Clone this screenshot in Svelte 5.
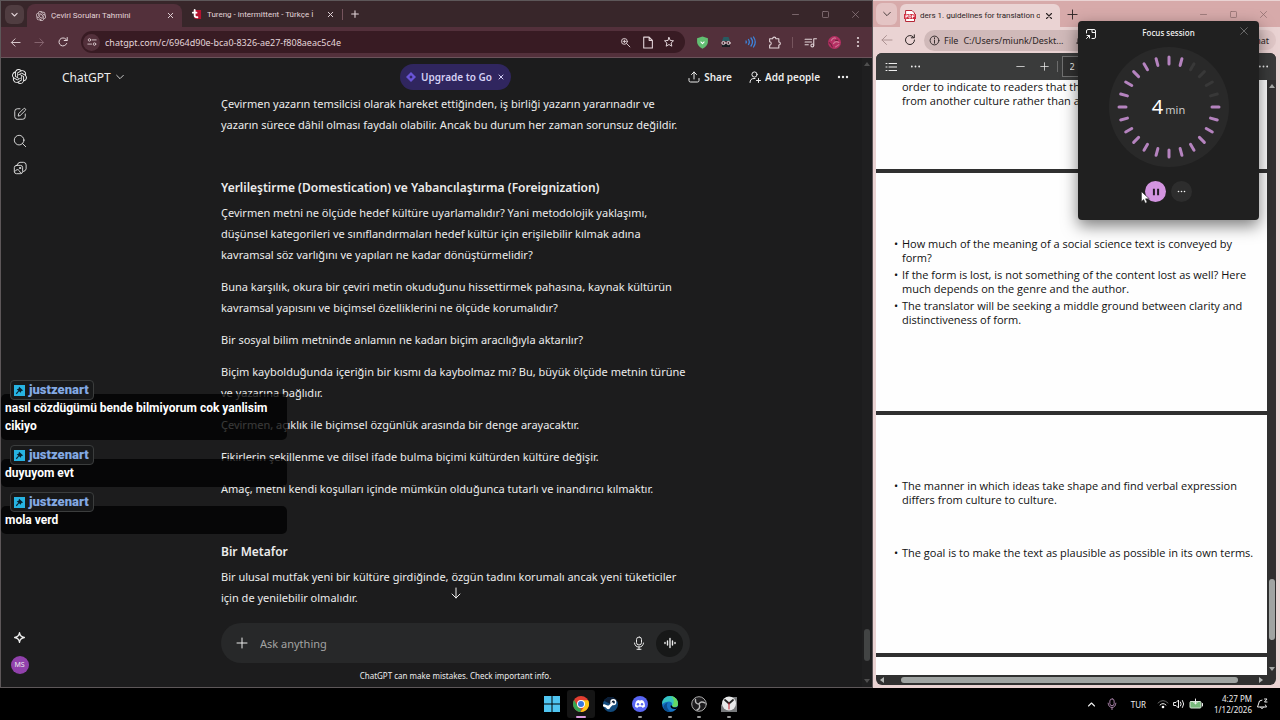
<script>
	const openai =
		'M22.28 9.82a5.98 5.98 0 0 0-.51-4.91 6.05 6.05 0 0 0-6.51-2.9A6.07 6.07 0 0 0 4.98 4.18a5.98 5.98 0 0 0-4 2.9 6.05 6.05 0 0 0 .75 7.1 5.98 5.98 0 0 0 .51 4.91 6.05 6.05 0 0 0 6.51 2.9A5.98 5.98 0 0 0 13.26 24a6.06 6.06 0 0 0 5.77-4.21 5.99 5.99 0 0 0 4-2.9 6.06 6.06 0 0 0-.75-7.07zm-9.02 12.61a4.48 4.48 0 0 1-2.88-1.04l.14-.08 4.78-2.76a.8.8 0 0 0 .39-.68v-6.74l2.02 1.17a.07.07 0 0 1 .04.05v5.58a4.5 4.5 0 0 1-4.49 4.5zM3.6 18.3a4.47 4.47 0 0 1-.54-3.01l.14.08 4.79 2.76a.77.77 0 0 0 .78 0l5.84-3.37v2.33a.08.08 0 0 1-.03.07L9.74 19.95A4.5 4.5 0 0 1 3.6 18.3zM2.34 7.9a4.49 4.49 0 0 1 2.37-1.98v5.68a.77.77 0 0 0 .38.68l5.82 3.35-2.02 1.17a.08.08 0 0 1-.07 0l-4.83-2.79A4.5 4.5 0 0 1 2.34 7.87zm16.6 3.85L13.1 8.36l2.02-1.16a.08.08 0 0 1 .07 0l4.83 2.79a4.49 4.49 0 0 1-.68 8.1v-5.67a.79.79 0 0 0-.4-.67zm2-3.02-.14-.09-4.77-2.78a.78.78 0 0 0-.79 0L9.41 9.23V6.9a.07.07 0 0 1 .03-.06l4.83-2.79a4.5 4.5 0 0 1 6.68 4.66zM8.3 12.86 6.29 11.7a.08.08 0 0 1-.04-.06V6.07a4.5 4.5 0 0 1 7.38-3.45l-.15.08L8.7 5.46a.8.8 0 0 0-.39.68zm1.1-2.36 2.6-1.5 2.61 1.5v3l-2.6 1.5-2.61-1.5z';

	const sections = [
		{
			paragraphs: [
				['Çevirmen yazarın temsilcisi olarak hareket ettiğinden, iş birliği yazarın yararınadır ve', 'yazarın sürece dâhil olması faydalı olabilir. Ancak bu durum her zaman sorunsuz değildir.']
			]
		},
		{
			title: 'Yerlileştirme (Domestication) ve Yabancılaştırma (Foreignization)',
			paragraphs: [
				['Çevirmen metni ne ölçüde hedef kültüre uyarlamalıdır? Yani metodolojik yaklaşımı,', 'düşünsel kategorileri ve sınıflandırmaları hedef kültür için erişilebilir kılmak adına', 'kavramsal söz varlığını ve yapıları ne kadar dönüştürmelidir?'],
				['Buna karşılık, okura bir çeviri metin okuduğunu hissettirmek pahasına, kaynak kültürün', 'kavramsal yapısını ve biçimsel özelliklerini ne ölçüde korumalıdır?'],
				['Bir sosyal bilim metninde anlamın ne kadarı biçim aracılığıyla aktarılır?'],
				['Biçim kaybolduğunda içeriğin bir kısmı da kaybolmaz mı? Bu, büyük ölçüde metnin türüne', 've yazarına bağlıdır.'],
				['Çevirmen, açıklık ile biçimsel özgünlük arasında bir denge arayacaktır.'],
				['Fikirlerin şekillenme ve dilsel ifade bulma biçimi kültürden kültüre değişir.'],
				['Amaç, metni kendi koşulları içinde mümkün olduğunca tutarlı ve inandırıcı kılmaktır.']
			]
		},
		{
			title: 'Bir Metafor',
			paragraphs: [
				['Bir ulusal mutfak yeni bir kültüre girdiğinde, özgün tadını korumalı ancak yeni tüketiciler', 'için de yenilebilir olmalıdır.']
			]
		}
	];

	const messages = [
		['nasıl cözdügümü bende bilmiyorum cok yanlisim', 'cikiyo'],
		['duyuyom evt'],
		['mola verd']
	];

	// 24 ticks round the dial, the elapsed ones are dimmed
	const ticks = Array.from({ length: 24 }, (_, i) => ({
		angle: i * 15,
		done: i > 1 && i < 6
	}));

	let question = '';
	let url = 'chatgpt.com/c/6964d90e-bca0-8326-ae27-f808aeac5c4e';
	let file = 'C:/Users/miunk/Deskt...';
	let page = '2';
</script>

<div class="desktop">
	<div class="windows">
		<section class="chrome">
			<div class="tabs">
				<button class="tab-search" aria-label="Search tabs">
					<svg viewBox="0 0 12 12" width="9" height="9"><path stroke-width="1.5" d="M2.5 4.5 6 8l3.5-3.5" /></svg>
				</button>
				<div class="tab active">
					<svg class="fill" viewBox="0 0 24 24" width="10" height="10"><path d={openai} /></svg>
					<span class="title">Çeviri Soruları Tahmini</span>
					<button aria-label="Close tab"><svg viewBox="0 0 12 12" width="9" height="9"><path stroke-width="1.3" d="m3 3 6 6M9 3 3 9" /></svg></button>
				</div>
				<div class="tab">
					<svg viewBox="0 0 12 12" width="11" height="11">
						<path fill="#b5122f" stroke="none" d="M3 1h8v10H4z" />
						<path stroke="#fff" stroke-width="2" d="M4 1v6q0 2 3 2M2 4h4" />
					</svg>
					<span class="title">Tureng - intermittent - Türkçe İ</span>
					<button aria-label="Close tab"><svg viewBox="0 0 12 12" width="9" height="9"><path stroke-width="1.3" d="m3 3 6 6M9 3 3 9" /></svg></button>
				</div>
				<i class="divider"></i>
				<button class="cell" aria-label="New tab"><svg viewBox="0 0 12 12" width="10" height="10"><path stroke-width="1.3" d="M6 2v8M2 6h8" /></svg></button>
				<div class="controls">
					<button aria-label="Minimize"><svg viewBox="0 0 12 12" width="9" height="9"><path d="M2 6h8" /></svg></button>
					<button aria-label="Maximize"><svg viewBox="0 0 12 12" width="9" height="9"><rect x="2" y="2" width="8" height="8" rx="1" /></svg></button>
					<button aria-label="Close"><svg viewBox="0 0 12 12" width="9" height="9"><path d="m2 2 8 8M10 2l-8 8" /></svg></button>
				</div>
			</div>

			<div class="toolbar">
				<button class="cell" aria-label="Back"><svg viewBox="0 0 12 12" width="11" height="11"><path d="M11 6H2M5.5 2 1.5 6l4 4" /></svg></button>
				<button class="cell dim" aria-label="Forward"><svg viewBox="0 0 12 12" width="11" height="11"><path d="M1 6h9M6.5 2l4 4-4 4" /></svg></button>
				<button class="cell" aria-label="Reload"><svg viewBox="0 0 12 12" width="12" height="12"><path d="M9.7 7.5A4 4 0 1 1 9 3.3l1.2 1.2M10.2 1.5v3h-3" /></svg></button>
				<div class="address">
					<button class="site" aria-label="Site information">
						<svg viewBox="0 0 12 12" width="10" height="10"><circle cx="3" cy="3.5" r="1.5" /><circle cx="9" cy="8.5" r="1.5" /><path d="M6.5 3.5H11M1 8.5h4.5" /></svg>
					</button>
					<input aria-label="Address" bind:value={url} />
					<button class="cell small" aria-label="Zoom"><svg viewBox="0 0 12 12" width="11" height="11"><circle cx="4.8" cy="4.8" r="3.2" /><path d="m7.3 7.3 3.5 3.5M3.3 4.8h3M4.8 3.3v3" /></svg></button>
					<button class="cell small" aria-label="Page"><svg viewBox="0 0 12 12" width="13" height="13"><path d="M2.5 1h5l3 3v7h-8zM7.5 1v3h3" /></svg></button>
					<button class="cell small" aria-label="Bookmark"><svg viewBox="0 0 12 12" width="12" height="12"><path d="m6 1.5 1.3 3 3.2.3-2.4 2.2.7 3.2L6 8.5l-2.8 1.7.7-3.2-2.4-2.2 3.2-.3z" /></svg></button>
				</div>
				<button class="cell" aria-label="Shield">
					<svg viewBox="0 0 12 12" width="13" height="13"><path fill="#62be72" stroke="none" d="M6 .5 11 2v3.5Q11 9 6 11.7 1 9 1 5.5V2z" /><path stroke="#fff" d="m4.5 5.5 1.5 1.5 1.5-1.5" /></svg>
				</button>
				<button class="cell" aria-label="Incognito extension">
					<svg viewBox="0 0 12 12" width="12" height="12"><path fill="#275b61" stroke="none" d="M2 5 3.5 1h5L10 5z" /><path fill="#191c22" stroke="none" d="M2 8h8v3H2z" /><circle cx="3.5" cy="7" r="1.6" /><circle cx="8.5" cy="7" r="1.6" /></svg>
				</button>
				<button class="cell blue" aria-label="Read aloud"><svg viewBox="0 0 12 12" width="12" height="12"><path stroke-width="1.3" d="M2 5q.6 1 0 2M4.5 3.5q1.6 2.5 0 5M7 2q3 4 0 8M9.5 1q3.5 5 0 10" /></svg></button>
				<button class="cell" aria-label="Extensions"><svg viewBox="0 0 12 12" width="13" height="13"><path d="M1.5 2.5h2.8a1.5 1.5 0 0 1 3 0H10v3a1.4 1.4 0 0 1 0 2.8V11H1.5V8.3a1.5 1.5 0 0 0 0-3z" /></svg></button>
				<i class="divider"></i>
				<button class="cell" aria-label="Media"><svg viewBox="0 0 12 12" width="13" height="13"><path d="M1 3h6M1 5.5h6M1 8h3M9 8.5v-6h2.5" /><circle cx="7.7" cy="8.7" r="1.3" /></svg></button>
				<button class="cell" aria-label="Profile">
					<svg viewBox="0 0 12 12" width="13" height="13"><circle cx="6" cy="6" r="6" fill="#b52f63" stroke="none" /><path stroke="#cf7896" d="M3 4q2-3 4-2M5 7q2-3 5-1M7 10l3-2" /><path stroke="#70213e" d="M1 6q2 1 3 4M7 4h2" /></svg>
				</button>
				<button class="cell" aria-label="Menu"><svg class="fill" viewBox="0 0 12 12" width="12" height="12"><circle cx="6" cy="2" r="1.1" /><circle cx="6" cy="6" r="1.1" /><circle cx="6" cy="10" r="1.1" /></svg></button>
			</div>

			<div class="chatgpt">
				<nav>
					<button aria-label="Home"><svg class="fill" viewBox="0 0 24 24" width="15" height="15"><path d={openai} /></svg></button>
					<button class="first" aria-label="New chat"><svg viewBox="0 0 16 16" width="14" height="14"><path d="M8 2H5Q2 2 2 5v6q0 3 3 3h6q3 0 3-3V8M6 10l.5-2.5L12 2q1-1 2 0t0 2L8.5 9.5z" /></svg></button>
					<button aria-label="Search chats"><svg viewBox="0 0 16 16" width="14" height="14"><circle cx="7" cy="7" r="5.5" /><path d="m11 11 3.5 3.5" /></svg></button>
					<button aria-label="Library"><svg viewBox="0 0 16 16" width="14" height="14"><rect x="1.5" y="5" width="9.5" height="9.5" rx="2.5" /><path d="M5 4.5q.5-3 3-3h4q3 .3 3 3V9q-.5 2.5-3 3M2 12q3-4 5-1l2 3" /><circle cx="8" cy="8" r=".8" /></svg></button>
					<span class="grow"></span>
					<button aria-label="Upgrade"><svg viewBox="0 0 16 16" width="13" height="13"><path stroke-width="1.6" d="M8 2q.7 5.3 6 6-5.3.7-6 6-.7-5.3-6-6 5.3-.7 6-6z" /></svg></button>
					<button class="avatar"><span>MS</span></button>
				</nav>

				<main>
					<header>
						<button class="model">ChatGPT <svg viewBox="0 0 12 12" width="10" height="10"><path d="m2 4 4 4 4-4" /></svg></button>
						<div class="upgrade">
							<svg viewBox="0 0 12 12" width="10" height="10"><path fill="#6954d6" stroke="none" d="m6 0 6 6-6 6-6-6z" /><path fill="#30265f" stroke="none" d="m6 4 2 2-2 2-2-2z" /></svg>
							<button>Upgrade to Go</button>
							<button aria-label="Dismiss"><svg viewBox="0 0 12 12" width="8" height="8"><path stroke-width="1.5" d="m3 3 6 6M9 3 3 9" /></svg></button>
						</div>
						<div class="actions">
							<button><svg viewBox="0 0 12 12" width="12" height="12"><path d="M6 8V1M3.5 3.5 6 1l2.5 2.5M1 7.5v2Q1 11 2.5 11h7Q11 11 11 9.5v-2" /></svg>Share</button>
							<button><svg viewBox="0 0 12 12" width="12" height="12"><circle cx="5.5" cy="3.5" r="2.6" /><path d="M1 11.5q0-4 4-4h1M9.5 7.5v4M7.5 9.5h4" /></svg>Add people</button>
							<button aria-label="More"><svg class="fill" viewBox="0 0 12 12" width="12" height="12"><circle cx="2" cy="6" r="1.2" /><circle cx="6" cy="6" r="1.2" /><circle cx="10" cy="6" r="1.2" /></svg></button>
						</div>
					</header>

					<div class="thread">
						<article>
							{#each sections as section}
								{#if section.title}<h3>{section.title}</h3>{/if}
								{#each section.paragraphs as lines}
									<p>
										{#each lines as line}<span>{line}</span>{/each}
									</p>
								{/each}
							{/each}
						</article>
						<button class="down" aria-label="Scroll to bottom"><svg viewBox="0 0 12 12" width="12" height="12"><path d="M6 1v10M2 7l4 4 4-4" /></svg></button>
					</div>

					<form class="composer">
						<button type="button" aria-label="Add"><svg viewBox="0 0 12 12" width="12" height="12"><path d="M6 1v10M1 6h10" /></svg></button>
						<input aria-label="Ask anything" placeholder="Ask anything" bind:value={question} />
						<button type="button" aria-label="Dictate"><svg viewBox="0 0 14 14" width="14" height="14"><rect x="4.5" y="1" width="5" height="8" rx="2.5" /><path d="M2.5 7q.5 4 4.5 4t4.500-4M7 11v2.5M5 13.300h4" /></svg></button>
						<button type="button" class="voice" aria-label="Voice mode"><svg viewBox="0 0 12 12" width="12" height="12"><path stroke-width="1.4" d="M1 5.5v1M3.5 4v4M6 1.5v9M8.5 4v4M11 5.5v1" /></svg></button>
					</form>
					<footer>ChatGPT can make mistakes. Check important info.</footer>
				</main>

				<div class="scroll">
					<svg class="fill" viewBox="0 0 6 4" width="6" height="4"><path d="m3 0 3 4H0z" /></svg>
					<i></i>
					<svg class="fill" viewBox="0 0 6 4" width="6" height="4"><path d="M0 0h6L3 4z" /></svg>
				</div>
			</div>

			<div class="stream-chat">
				{#each messages as lines}
					<div class="message">
						<b class="user">
							<svg viewBox="0 0 12 12" width="11" height="11"><path fill="#27b3e2" stroke="none" d="M0 0h12v12H0z" /><path fill="#08202e" stroke="none" d="m5.5 2 4.5 4-2 .5-.6 2-1.9-1.7L3 10 2 9l2.700-2.800L3 4.500l2-.5z" /></svg>
							justzenart
						</b>
						<div class="text">
							{#each lines as line}<span>{line}</span>{/each}
						</div>
					</div>
				{/each}
			</div>
		</section>

		<section class="edge">
			<div class="tabs">
				<button class="tab-search" aria-label="Tab actions"><svg viewBox="0 0 12 12" width="10" height="10"><path d="m2 4 4 4 4-4" /></svg></button>
				<div class="tab active">
					<svg viewBox="0 0 12 12" width="12" height="12"><path fill="#fff" stroke="#b52636" d="M2 .5h6L10.5 3v8.500H2z" /><path fill="#d12c3f" stroke="none" d="M0 4h12v5H0z" /><path stroke="#fff" stroke-width=".8" d="M2 8V5h1.500v1.500H2M5 5v3h1q1 0 1-1.500T6 5zM8.500 8V5h2M8.500 6.500H10" /></svg>
					<span class="title">ders 1. guidelines for translation o</span>
					<button aria-label="Close tab"><svg viewBox="0 0 12 12" width="10" height="10"><path stroke-width="1.3" d="m3 3 6 6M9 3 3 9" /></svg></button>
				</div>
				<button class="cell" aria-label="New tab"><svg viewBox="0 0 12 12" width="11" height="11"><path d="M6 1v10M1 6h10" /></svg></button>
				<div class="controls">
					<button aria-label="Minimize"><svg viewBox="0 0 12 12" width="9" height="9"><path d="M2 6h8" /></svg></button>
					<button aria-label="Maximize"><svg viewBox="0 0 12 12" width="9" height="9"><rect x="2" y="2" width="8" height="8" rx="1" /></svg></button>
					<button aria-label="Close"><svg viewBox="0 0 12 12" width="9" height="9"><path d="m2 2 8 8M10 2l-8 8" /></svg></button>
				</div>
			</div>
			<div class="toolbar">
				<button class="cell dim" aria-label="Back"><svg viewBox="0 0 12 12" width="12" height="12"><path d="M11 6H1M5.5 1.5 1 6l4.5 4.5" /></svg></button>
				<button class="cell" aria-label="Refresh"><svg viewBox="0 0 12 12" width="12" height="12"><path d="M10.5 6A4.5 4.5 0 1 1 9 2.700l1 1M10.300.8v3h-3" /></svg></button>
				<div class="address">
					<svg viewBox="0 0 12 12" width="11" height="11"><circle cx="6" cy="6" r="4.8" /><path d="M6 5.5V9M6 3v1" /></svg>
					<label for="file">File</label>
					<input id="file" bind:value={file} />
					<svg viewBox="0 0 12 12" width="12" height="12"><path d="M2 9q1.5-1.5 1-4 .5-3.5 3-3.500T9 5q-.5 2.500 1 4zM5 11h2" /></svg>
				</div>
				<button class="side">Chat</button>
			</div>

			<div class="viewer">
				<div class="pdf-bar">
					<button class="cell" aria-label="Contents"><svg viewBox="0 0 12 12" width="12" height="12"><path d="M4 2.5h8M4 6h8M4 9.5h8M1 2.5h1M1 6h1M1 9.5h1" /></svg></button>
					<button class="cell" aria-label="More"><svg class="fill" viewBox="0 0 12 12" width="11" height="11"><circle cx="2" cy="6" r="1" /><circle cx="6" cy="6" r="1" /><circle cx="10" cy="6" r="1" /></svg></button>
					<div class="zoom">
						<button class="cell" aria-label="Zoom out"><svg viewBox="0 0 12 12" width="9" height="9"><path d="M1 6h10" /></svg></button>
						<button class="cell" aria-label="Zoom in"><svg viewBox="0 0 12 12" width="9" height="9"><path d="M1 6h10M6 1v10" /></svg></button>
						<i class="divider"></i>
						<input aria-label="Page number" bind:value={page} />
					</div>
					<button class="cell" aria-label="Settings"><svg class="fill" viewBox="0 0 12 12" width="11" height="11"><circle cx="2" cy="6" r="1" /><circle cx="6" cy="6" r="1" /><circle cx="10" cy="6" r="1" /></svg></button>
				</div>
				<div class="document">
					<div class="pages">
						<div class="page cut">
							<p><span>order to indicate to readers that they are reading a text</span><span>from another culture rather than another text</span></p>
						</div>
						<div class="page">
							<ul>
								<li>How much of the meaning of a social science text is conveyed by<br />form?</li>
								<li>If the form is lost, is not something of the content lost as well? Here<br />much depends on the genre and the author.</li>
								<li>The translator will be seeking a middle ground between clarity and<br />distinctiveness of form.</li>
							</ul>
						</div>
						<div class="page">
							<ul class="wide">
								<li>The manner in which ideas take shape and find verbal expression<br />differs from culture to culture.</li>
								<li>The goal is to make the text as plausible as possible in its own terms.</li>
							</ul>
						</div>
						<div class="page last"></div>
					</div>
					<div class="vbar">
						<svg class="fill" viewBox="0 0 6 4" width="6" height="4"><path d="m3 0 3 4H0z" /></svg>
						<i></i>
						<svg class="fill" viewBox="0 0 6 4" width="6" height="4"><path d="M0 0h6L3 4z" /></svg>
					</div>
				</div>
				<div class="hbar">
					<svg class="fill" viewBox="0 0 4 6" width="4" height="6"><path d="M4 0v6L0 3z" /></svg>
					<i></i>
					<svg class="fill" viewBox="0 0 4 6" width="4" height="6"><path d="m0 0 4 3-4 3z" /></svg>
				</div>
			</div>
		</section>
	</div>

	<div class="taskbar">
		<div class="apps">
			<button aria-label="Start"><svg viewBox="0 0 16 16" width="16" height="16"><path fill="#50c5f1" stroke="none" d="M0 0h7.5v7.5H0zM8.5 0H16v7.5H8.5zM0 8.5h7.5V16H0zM8.5 8.5H16V16H8.5z" /></svg></button>
			<button class="open current" aria-label="Chrome">
				<svg viewBox="0 0 16 16" width="16" height="16"><g stroke="none"><circle cx="8" cy="8" r="8" fill="#e43e31" /><path fill="#35a853" d="M1.1 4 6 12.5l2-.5-.5 4A8 8 0 0 1 1.100 4z" /><path fill="#fbc815" d="M8 4.300h7.100A8 8 0 0 1 7.500 16l4-6z" /><circle cx="8" cy="8" r="4" fill="#fff" /><circle cx="8" cy="8" r="3" fill="#3978df" /></g></svg>
			</button>
			<button aria-label="Steam">
				<svg viewBox="0 0 16 16" width="15" height="15"><circle cx="8" cy="8" r="8" fill="#124a7c" stroke="none" /><path fill="#0b1d35" stroke="none" d="M1 4a8 8 0 0 1 14 0L9 8z" /><path stroke="#fff" stroke-width="2.5" d="m1 9 5 2 4-4" /><circle cx="11" cy="5.5" r="2.5" stroke="#fff" stroke-width="1.5" /><circle cx="5.5" cy="11" r="2" fill="#fff" stroke="none" /></svg>
			</button>
			<button class="open" aria-label="Discord">
				<svg viewBox="0 0 16 16" width="16" height="16"><circle cx="8" cy="8" r="8" fill="#5865f2" stroke="none" /><path fill="#fff" stroke="none" d="M3 10.5Q3 6 5 4.500l2-.6.4.7h1.200l.4-.7 2 .6q2 1.500 2 6-1.300 1.200-2.700 1.300l-.6-1H6.300l-.6 1Q4.300 11.700 3 10.500z" /><circle cx="6" cy="8.3" r="1.2" fill="#5865f2" stroke="none" /><circle cx="10" cy="8.3" r="1.2" fill="#5865f2" stroke="none" /></svg>
			</button>
			<button class="open" aria-label="Edge">
				<svg viewBox="0 0 16 16" width="16" height="16"><g stroke="none"><circle cx="8" cy="8" r="8" fill="#1672c4" /><path fill="#36c6c1" d="M0 8a8 8 0 0 1 16 0q0 3-3.500 3-3 0-2.500-1.500Q11 6 7 5.500 3 5.500 0 8z" /><path fill="#65d963" d="M9 0q7 1.500 7 8 0 3-3.500 3-2 0-2.500-1 4-5-1-10z" /><path fill="#0b4f91" d="M5 8q-1 5 4 7.900Q1 16 1.500 10.500 3 7 6 6.500z" /><path fill="#000" d="M10 10q.5 1.500 3 1.500 1.800 0 2.800-1-.8 1.500-2 2.500-5 .5-5.300-3 .5-1.500 1.500 0z" /></g></svg>
			</button>
			<button class="open" aria-label="OBS Studio">
				<svg viewBox="0 0 16 16" width="16" height="16"><circle cx="8" cy="8" r="7.3" fill="#1c1b1d" stroke="#aaa" /><g stroke="#bbb" stroke-width="1.4"><path d="M8 8Q4 8 4.500 3.500M8 8q2-3.500 6-1M8 8q2 4-2 6" /></g></svg>
			</button>
			<button class="open" aria-label="Clock">
				<svg viewBox="0 0 16 16" width="16" height="16"><path fill="#77797b" stroke="none" d="M8 1h8v15H0V9z" /><circle cx="8" cy="7.5" r="7" fill="#e8e9ea" stroke="none" /><path stroke="#222" stroke-width="1.8" d="m4 4 4 3.500L12 4" /><path stroke="#ca2735" d="M8 7v6" /></svg>
			</button>
		</div>
		<div class="tray">
			<button aria-label="Hidden icons"><svg viewBox="0 0 12 12" width="9" height="9"><path stroke-width="1.5" d="m2 8 4-4 4 4" /></svg></button>
			<button class="mic" aria-label="Microphone"><svg viewBox="0 0 14 14" width="12" height="12"><rect x="4.5" y="1" width="5" height="8" rx="2.5" /><path d="M2.500 6q.5 5 4.500 5t4.500-5M7 11v3" /></svg></button>
			<button class="lang">TUR</button>
			<button class="status" aria-label="Network, volume and battery">
				<svg viewBox="0 0 12 12" width="12" height="12"><path stroke="#666" d="M1 5q5-5 10 0" /><path d="M3 7q3-3 6 0" /><circle cx="6" cy="9" r="1.3" fill="#fff" stroke="none" /></svg>
				<svg viewBox="0 0 12 12" width="12" height="12"><path d="M1 4.500h2L5.500 2v8L3 7.500H1zM7.500 4q1.500 2 0 4M9.500 2.500q2.500 3.500 0 7" /></svg>
				<svg viewBox="0 0 14 12" width="14" height="12"><rect x="1" y="3.5" width="11" height="6.5" rx="1" fill="#77b87b" stroke="#d5e5d5" /><path d="M13.500 5.500v2.500M6.500 1v5M4.500 4l2 2 2-2" /></svg>
			</button>
			<button class="clock"><span>4:27 PM</span><span>1/12/2026</span></button>
			<button class="notify" aria-label="Notifications"><svg viewBox="0 0 12 12" width="12" height="12"><path d="M6 2Q2.500 2 2.500 6L1.500 9h9l-1-2M4.500 9.500q1.500 2.500 3 0M8.500 1h2.500L8.500 4H11" /></svg></button>
		</div>
	</div>

	<aside class="focus">
		<button class="restore" aria-label="Back to full view"><svg viewBox="0 0 12 12" width="12" height="12"><path d="M1.5 5V3q0-1.5 1.5-1.5h6q1.5 0 1.5 1.500v6q0 1.500-1.500 1.500H7M7 2v2.500h3M1.500 10.500l3-3M2 7.500h2.500V10" /></svg></button>
		<h2>Focus session</h2>
		<button class="close" aria-label="Close"><svg viewBox="0 0 12 12" width="10" height="10"><path d="m2 2 8 8M10 2l-8 8" /></svg></button>
		<div class="dial">
			<svg viewBox="-60 -60 120 120" width="120" height="120">
				{#each ticks as tick}
					<path class:done={tick.done} class="tick" d="M0-50v7" transform="rotate({tick.angle})" />
				{/each}
			</svg>
			<div class="left"><strong>4</strong><span>min</span></div>
		</div>
		<div class="buttons">
			<button class="pause" aria-label="Pause"><svg viewBox="0 0 12 12" width="10" height="10"><path stroke-width="2.4" d="M3.5 2v8M8.5 2v8" /></svg></button>
			<button aria-label="More options"><svg class="fill" viewBox="0 0 12 12" width="9" height="9"><circle cx="2" cy="6" r="1.1" /><circle cx="6" cy="6" r="1.1" /><circle cx="10" cy="6" r="1.1" /></svg></button>
		</div>
		<svg class="cursor" viewBox="0 0 10 14" width="9" height="13"><path fill="#fff" stroke="#222" stroke-width=".6" d="M.5.5v11L3 9.300l1.800 4 2-.9L5 8.500h3.800z" /></svg>
	</aside>
</div>

<style>
	:global(body) {
		background: #000;
	}

	.desktop {
		position: relative;
		display: flex;
		flex-direction: column;
		height: 100vh;
		overflow: hidden;
		font-family: 'Noto Sans', 'Open Sans', sans-serif;
		font-size: 11px;
	}

	.desktop * {
		box-sizing: border-box;
	}

	button,
	input {
		margin: 0;
		padding: 0;
		border: 0;
		background: none;
		color: inherit;
		font: inherit;
	}

	input {
		min-width: 0;
		outline: none;
	}

	button {
		display: flex;
		align-items: center;
		justify-content: center;
	}

	svg {
		flex: none;
		display: block;
		fill: none;
		stroke: currentColor;
		stroke-linecap: round;
		stroke-linejoin: round;
	}

	.fill {
		fill: currentColor;
		stroke: none;
	}

	.windows {
		flex: 1;
		display: grid;
		grid-template-columns: 873fr 407fr;
		min-height: 0;
	}

	.cell {
		flex: none;
		width: 24px;
		height: 22px;
	}

	.cell.small {
		width: 22px;
	}

	.tabs,
	.toolbar {
		display: flex;
		align-items: center;
		flex: none;
	}

	.tabs {
		font-family: Roboto, 'Noto Sans', sans-serif;
		font-size: 8px;
	}

	.title {
		flex: 1;
		overflow: hidden;
		white-space: nowrap;
	}

	.controls {
		display: flex;
		margin-left: auto;
		padding-right: 2px;
	}

	.controls button {
		width: 30px;
		height: 24px;
	}

	.divider {
		width: 1px;
		height: 11px;
		background: #76545d;
	}

	/* left window */
	.chrome {
		position: relative;
		display: flex;
		flex-direction: column;
		min-width: 0;
		min-height: 0;
		border: 1px solid #5d5759;
		background: #1c1c1d;
		color: #e3d5d9;
	}

	.chrome .tabs {
		height: 26px;
		padding-left: 4px;
		background: #38262a;
	}

	.chrome .tab-search {
		width: 19px;
		height: 19px;
		margin-right: 3px;
		border-radius: 6px;
		background: #503d41;
	}

	.tab {
		display: flex;
		align-items: center;
		gap: 5px;
		width: 160px;
		height: 23px;
		padding: 0 7px 0 9px;
	}

	.chrome .tab.active {
		width: 155px;
		align-self: flex-end;
		border-radius: 8px 8px 0 0;
		background: #53303b;
	}

	.chrome .controls {
		color: #8f7b80;
	}

	.chrome .toolbar {
		height: 31px;
		padding: 0 2px;
		border-bottom: 1px solid #6b535b;
		background: #53303b;
	}

	.chrome .dim {
		color: #8a6873;
	}

	.chrome .blue {
		color: #3d84dc;
	}

	.chrome .address {
		flex: 1;
		display: flex;
		align-items: center;
		height: 22px;
		margin: 0 5px 0 6px;
		padding: 0 5px 0 2px;
		border-radius: 11px;
		background: #381b23;
		font-size: 9px;
	}

	.chrome .address input {
		flex: 1;
		margin-left: 5px;
	}

	.site {
		width: 17px;
		height: 17px;
		border-radius: 50%;
		background: #53303b;
	}

	.chrome .toolbar .divider {
		margin: 0 5px 0 6px;
	}

	.chatgpt {
		flex: 1;
		display: flex;
		min-height: 0;
		color: #ececec;
	}

	nav {
		display: flex;
		flex-direction: column;
		width: 48px;
		padding: 5px 0 9px 5px;
	}

	nav button {
		width: 27px;
		height: 27px;
	}

	nav .first {
		margin-top: 10px;
	}

	.grow {
		flex: 1;
	}

	.avatar span {
		width: 18px;
		border-radius: 50%;
		background: #9141ac;
		font-size: 7px;
		line-height: 18px;
		text-align: center;
	}

	main {
		flex: 1;
		display: flex;
		flex-direction: column;
		min-width: 0;
	}

	header {
		display: grid;
		grid-template-columns: 1fr auto 1fr;
		align-items: center;
		height: 35px;
		padding: 3px 13px 0;
	}

	.model {
		gap: 4px;
		justify-self: start;
		font-size: 12px;
	}

	.upgrade {
		display: flex;
		align-items: center;
		gap: 5px;
		height: 26px;
		padding: 0 6px;
		border-radius: 13px;
		background: #30265f;
		color: #d5d1f5;
		font-size: 10px;
		font-weight: 600;
	}

	.actions {
		display: flex;
		justify-content: flex-end;
		gap: 17px;
		font-size: 10px;
		font-weight: 600;
	}

	.actions button {
		gap: 4px;
	}

	.thread {
		position: relative;
		flex: 1;
		min-height: 0;
		overflow: hidden;
	}

	article {
		width: 100%;
		max-width: 469px;
		margin: 0 auto;
		line-height: 21px;
		white-space: nowrap;
	}

	article p {
		margin: 0 0 11px;
	}

	article p span,
	.text span,
	.page p span {
		display: block;
	}

	h3 {
		margin: 42px 0 4px;
		font-size: 12px;
		font-weight: 600;
	}

	.down {
		position: absolute;
		bottom: 20px;
		left: 50%;
		width: 20px;
		height: 20px;
		margin-left: -10px;
	}

	.composer {
		display: flex;
		align-items: center;
		width: 100%;
		max-width: 469px;
		height: 40px;
		margin: 0 auto;
		padding: 0 7px;
		border-radius: 20px;
		background: #272829;
	}

	.composer button {
		width: 27px;
		height: 27px;
	}

	.composer input {
		flex: 1;
		margin: 0 5px;
	}

	.composer input::placeholder {
		color: #a3a3a3;
		opacity: 1;
	}

	.composer .voice {
		margin-left: 4px;
		border-radius: 50%;
		background: #171818;
	}

	footer {
		height: 24px;
		font-size: 8px;
		line-height: 25px;
		text-align: center;
	}

	.scroll {
		display: flex;
		flex-direction: column;
		align-items: center;
		width: 10px;
		padding: 4px 0;
		background: #1f1f20;
		color: #4f4f4f;
	}

	.scroll i {
		width: 6px;
		height: 32px;
		margin: auto 0 18px;
		border-radius: 3px;
		background: #424444;
	}

	/* stream messages laid over the desktop */
	.stream-chat {
		position: absolute;
		top: 379px;
		left: 0;
		display: flex;
		flex-direction: column;
		gap: 5px;
		width: 286px;
		color: #fff;
		font-family: Roboto, sans-serif;
		font-size: 12px;
		font-weight: 700;
		line-height: 18px;
	}

	.user {
		position: relative;
		z-index: 1;
		display: flex;
		align-items: center;
		gap: 4px;
		width: max-content;
		height: 20px;
		margin: 0 0 -6px 9px;
		padding: 0 4px 0 3px;
		border: 1px solid #3b3d3d;
		border-radius: 4px;
		background: #18191a;
		color: #83a9e2;
		font-size: 13px;
	}

	.text {
		padding: 5px 4px;
		border-radius: 5px;
		background: rgba(0, 0, 0, 0.76);
		white-space: nowrap;
	}

	/* right window */
	.edge {
		display: flex;
		flex-direction: column;
		min-width: 0;
		min-height: 0;
		padding: 1px 4px 3px 3px;
		background: #ead3d3;
		color: #2c2424;
	}

	.edge .tabs {
		height: 26px;
		margin: 0 -4px 0 -3px;
		padding-left: 3px;
		background: #d7aaaa;
	}

	.edge .tab-search {
		width: 21px;
		height: 22px;
		margin-right: 3px;
		border-radius: 6px;
		background: #e4c4c4;
	}

	.edge .tab {
		gap: 4px;
		padding: 0 6px 0 4px;
		align-self: flex-end;
		border-radius: 6px 6px 0 0;
		background: #ead3d3;
	}

	.edge .controls {
		color: #8f6d6d;
	}

	.edge .toolbar {
		gap: 1px;
		height: 26px;
		font-size: 9px;
	}

	.edge .toolbar .cell {
		width: 22px;
	}

	.edge .dim {
		color: #ad9393;
	}

	.edge .address {
		flex: 1;
		display: flex;
		align-items: center;
		gap: 4px;
		height: 21px;
		margin-left: 2px;
		padding: 0 6px 0 5px;
		border-radius: 11px;
		background: #d0b9b9;
	}

	.edge .address input {
		width: 108px;
		margin-left: 1px;
	}

	.side {
		justify-content: flex-end;
		width: 60px;
		height: 20px;
		padding-right: 7px;
		border-radius: 10px;
		background: #e0c7c7;
	}

	.viewer {
		flex: 1;
		display: flex;
		flex-direction: column;
		min-height: 0;
		overflow: hidden;
		border-radius: 6px;
		background: #303030;
	}

	.pdf-bar {
		display: flex;
		align-items: center;
		height: 27px;
		padding: 0 1px 0 3px;
		background: #3a3b3b;
		color: #eee;
		font-size: 9px;
	}

	.zoom {
		flex: 1;
		display: flex;
		align-items: center;
		justify-content: center;
	}

	.zoom .divider {
		background: #6c6c6c;
	}

	.zoom input {
		width: 108px;
		height: 21px;
		margin-left: 4px;
		padding-left: 7px;
		border: 1px solid #707070;
		background: #303030;
	}

	.document {
		flex: 1;
		display: flex;
		min-height: 0;
	}

	.pages {
		flex: 1;
		display: flex;
		flex-direction: column;
		gap: 4px;
		min-width: 0;
		color: #111;
		font-family: 'Open Sans', Lato, sans-serif;
		line-height: 14px;
		white-space: nowrap;
	}

	.page {
		flex: none;
		height: 238px;
		padding: 64px 0 0 26px;
		overflow: hidden;
		background: #fefefe;
	}

	.page.cut {
		height: 89px;
		padding-top: 0;
	}

	.page.last {
		flex: 1;
		padding: 0;
	}

	.page p {
		margin: 0;
	}

	ul {
		display: flex;
		flex-direction: column;
		gap: 3px;
		margin: 0;
		padding: 0;
		list-style: none;
	}

	ul.wide {
		gap: 39px;
	}

	li::before {
		content: '•';
		display: inline-block;
		width: 8px;
		margin-left: -8px;
	}

	.vbar {
		display: flex;
		flex-direction: column;
		align-items: center;
		width: 9px;
		padding: 4px 0;
		color: #a4a7a5;
	}

	.vbar i {
		width: 6px;
		height: 61px;
		margin: auto 0 27px;
		border-radius: 3px;
		background: #a0a4a2;
	}

	.hbar {
		display: flex;
		align-items: center;
		height: 10px;
		padding: 0 13px 0 4px;
		color: #b4b7b5;
	}

	.hbar i {
		flex: 1;
		height: 6px;
		margin: 0 21px 0 17px;
		border-radius: 3px;
		background: #a0a4a2;
	}

	.taskbar {
		display: grid;
		grid-template-columns: 1fr 205px 1fr;
		height: 32px;
		background: #000;
		color: #eee;
	}

	.apps {
		grid-column: 2;
		display: flex;
		align-items: center;
		justify-content: space-between;
	}

	.apps button {
		position: relative;
		width: 28px;
		height: 28px;
		border-radius: 3px;
	}

	.apps .current {
		background: #151515;
	}

	.apps .open::after {
		content: '';
		position: absolute;
		bottom: 0;
		left: 12px;
		width: 4px;
		height: 2px;
		border-radius: 1px;
		background: #999;
	}

	.apps .current::after {
		left: 9px;
		width: 10px;
		background: #dc9be0;
	}

	.tray {
		display: flex;
		align-items: center;
		justify-content: flex-end;
		padding-right: 12px;
		font-size: 8px;
	}

	.tray .mic {
		margin: 0 13px 0 10px;
		color: #bd92bd;
	}

	.status {
		gap: 4px;
		margin: 0 11px;
	}

	.clock {
		flex-direction: column;
		align-items: flex-end;
		line-height: 11px;
	}

	.notify {
		margin-left: 4px;
	}

	/* timer widget floats above both windows */
	.focus {
		position: absolute;
		top: 21px;
		right: 21px;
		display: grid;
		grid-template-columns: 26px 1fr 30px;
		width: 181px;
		border-radius: 4px;
		background: #202020;
		box-shadow: 0 6px 16px rgba(0, 0, 0, 0.5);
		color: #f4f4f4;
	}

	.focus .restore {
		height: 26px;
	}

	.focus .close {
		height: 20px;
		color: #777;
	}

	.focus h2 {
		margin: 0 0 0 4px;
		font-size: 8px;
		font-weight: 500;
		line-height: 24px;
		text-align: center;
	}

	.dial {
		grid-column: 1 / -1;
		display: grid;
		width: 120px;
		height: 120px;
		margin: 0 auto;
		border-radius: 50%;
		background: #292929;
	}

	.dial svg,
	.dial .left {
		grid-area: 1 / 1;
	}

	.left {
		display: flex;
		align-items: baseline;
		justify-content: center;
		gap: 2px;
		line-height: 120px;
		color: #ccc;
		font-size: 11px;
	}

	.left strong {
		color: #fff;
		font-size: 20px;
		font-weight: 400;
	}

	.tick {
		stroke: #b583bf;
		stroke-width: 3px;
	}

	.tick.done {
		stroke: #383838;
	}

	.buttons {
		grid-column: 1 / -1;
		display: flex;
		justify-content: center;
		gap: 5px;
		padding: 14px 0 18px;
	}

	.buttons button {
		width: 21px;
		height: 21px;
		border-radius: 50%;
		background: #2d2d2d;
	}

	.buttons .pause {
		background: #d394e0;
		color: #241b26;
	}

	.pause svg {
		stroke-linecap: butt;
	}

	.cursor {
		position: absolute;
		top: 170px;
		left: 63px;
	}
</style>
